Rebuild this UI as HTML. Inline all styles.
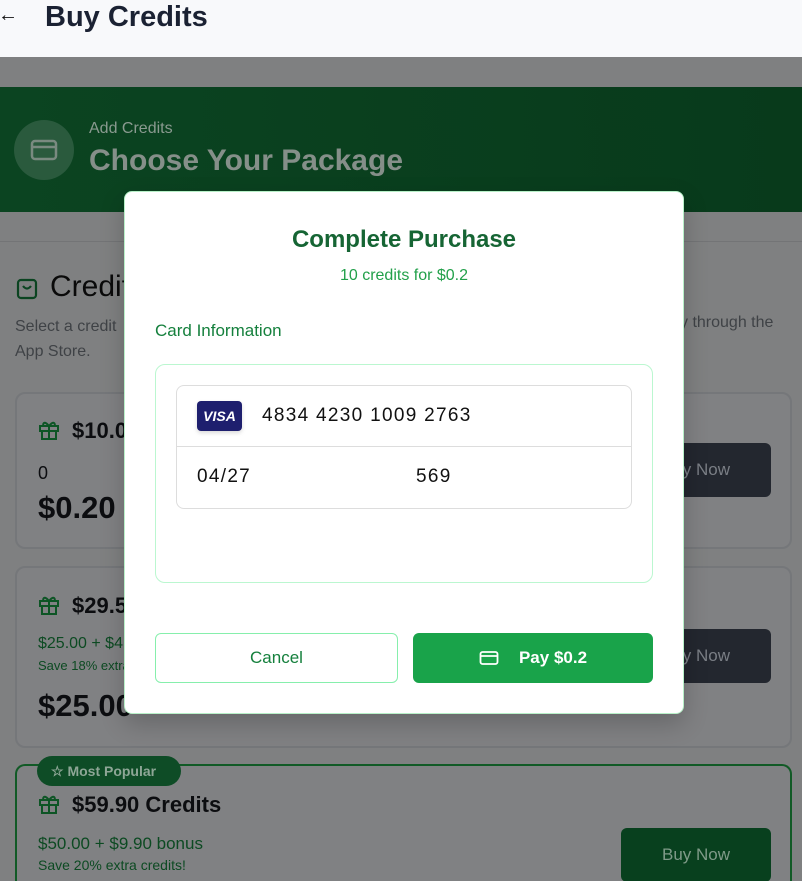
<!DOCTYPE html>
<html style="width:802px;height:881px;overflow:hidden"><head><meta charset="utf-8"><style>
*{box-sizing:border-box;margin:0;padding:0}
body{width:802px;height:881px;overflow:hidden;background:#7f8081;font-family:"Liberation Sans",sans-serif;position:relative}
.a{position:absolute}
.card{position:absolute;left:15px;width:777px;border:2px solid #75777a;border-radius:10px;background:#808183}
.bn{position:absolute;left:621px;width:150px;height:54px;border-radius:6px;background:#23272f;color:#7a7e85;font-size:17px;display:flex;align-items:center;justify-content:center}
.gift{position:absolute;left:38px}
</style></head><body>
<div class="a" style="left:0;top:0;width:802px;height:57px;background:#f8f9fb"></div>
<div class="a" style="left:-2px;top:4px;font-size:20px;color:#111">←</div>
<div class="a" style="left:45px;top:-1px;font-size:29px;font-weight:bold;color:#1b2233;line-height:36px">Buy Credits</div>
<div class="a" style="left:0;top:87px;width:802px;height:125px;background:linear-gradient(90deg,#0b4421,#083a1b)"></div>
<div class="a" style="left:14px;top:120px;width:60px;height:60px;border-radius:50%;background:#2a5a3d"></div>
<svg class="a" style="left:30px;top:138px" width="28" height="24" viewBox="0 0 28 24"><rect x="2" y="3" width="24" height="18" rx="3" fill="none" stroke="#7a8a80" stroke-width="2.5"/><line x1="2" y1="9" x2="26" y2="9" stroke="#7a8a80" stroke-width="2.5"/></svg>
<div class="a" style="left:89px;top:120px;font-size:16px;color:#8a9a90">Add Credits</div>
<div class="a" style="left:89px;top:144px;font-size:30px;font-weight:bold;color:#858f89">Choose Your Package</div>
<div class="a" style="left:0;top:241px;width:802px;height:1px;background:#737476"></div>
<svg class="a" style="left:16px;top:276px" width="22" height="24" viewBox="0 0 22 24"><rect x="2" y="4" width="18" height="18" rx="3" fill="none" stroke="#0b4421" stroke-width="2.2"/><path d="M7 10q4 5 8 0" fill="none" stroke="#0b4421" stroke-width="2.2"/></svg>
<div class="a" style="left:50px;top:270px;font-size:30px;color:#0a0a0a">Credits</div>
<div class="a" style="left:15px;top:314px;font-size:16px;color:#3f4246;line-height:25px">Select a credit<br>App Store.</div>
<div class="a" style="left:680px;top:314px;font-size:16px;color:#3f4246">y through the</div>
<div class="card" style="top:392px;height:157px"></div>
<div class="card" style="top:566px;height:182px"></div>
<div class="card" style="top:764px;height:117px;border-bottom:none;border-radius:10px 10px 0 0;border-color:#115a26"></div>
<svg class="gift" style="top:419px" width="22" height="22" viewBox="0 0 22 22"><g fill="none" stroke="#0d5525" stroke-width="2"><rect x="2" y="7" width="18" height="5"/><rect x="4" y="12" width="14" height="8"/><line x1="11" y1="7" x2="11" y2="20"/><path d="M11 7q-5-6-6-1M11 7q5-6 6-1"/></g></svg>
<svg class="gift" style="top:594px" width="22" height="22" viewBox="0 0 22 22"><g fill="none" stroke="#0d5525" stroke-width="2"><rect x="2" y="7" width="18" height="5"/><rect x="4" y="12" width="14" height="8"/><line x1="11" y1="7" x2="11" y2="20"/><path d="M11 7q-5-6-6-1M11 7q5-6 6-1"/></g></svg>
<svg class="gift" style="top:793px" width="22" height="22" viewBox="0 0 22 22"><g fill="none" stroke="#0d5525" stroke-width="2"><rect x="2" y="7" width="18" height="5"/><rect x="4" y="12" width="14" height="8"/><line x1="11" y1="7" x2="11" y2="20"/><path d="M11 7q-5-6-6-1M11 7q5-6 6-1"/></g></svg>
<div class="a" style="left:72px;top:418px;font-size:22px;font-weight:bold;color:#0c0d10">$10.00</div>
<div class="a" style="left:38px;top:463px;font-size:18px;color:#0c0d10">0</div>
<div class="a" style="left:38px;top:490px;font-size:31px;font-weight:bold;color:#0c0d10">$0.20</div>
<div class="a" style="left:72px;top:593px;font-size:22px;font-weight:bold;color:#0c0d10">$29.50</div>
<div class="a" style="left:38px;top:635px;font-size:16px;color:#0c4a22">$25.00 + $4</div>
<div class="a" style="left:38px;top:658px;font-size:13px;color:#0c4a22">Save 18% extra</div>
<div class="a" style="left:38px;top:688px;font-size:31px;font-weight:bold;color:#0c0d10">$25.00</div>
<div class="a" style="left:37px;top:756px;width:144px;height:30px;border-radius:15px;background:#0e4c26;color:#8ea696;font-size:14px;font-weight:bold;display:flex;align-items:center;padding-left:14px">☆ Most Popular</div>
<div class="a" style="left:72px;top:792px;font-size:22px;font-weight:bold;color:#0c0d10">$59.90 Credits</div>
<div class="a" style="left:38px;top:834px;font-size:17px;color:#0c4a22">$50.00 + $9.90 bonus</div>
<div class="a" style="left:38px;top:857px;font-size:14px;color:#0c4a22">Save 20% extra credits!</div>
<div class="bn" style="top:443px">Buy Now</div>
<div class="bn" style="top:629px">Buy Now</div>
<div class="bn" style="top:828px;background:#08401e;color:#7f9a88">Buy Now</div>

<div class="a" style="left:124px;top:191px;width:560px;height:523px;background:#fff;border:1px solid #b8f0c8;border-radius:8px;box-shadow:0 10px 25px rgba(0,0,0,.2)"></div>
<div class="a" style="left:124px;top:226px;width:560px;text-align:center;font-size:24px;font-weight:bold;color:#166534">Complete Purchase</div>
<div class="a" style="left:124px;top:267px;width:560px;text-align:center;font-size:16px;color:#22a04a">10 credits for $0.2</div>
<div class="a" style="left:155px;top:321px;font-size:17px;color:#15803d">Card Information</div>
<div class="a" style="left:155px;top:364px;width:498px;height:219px;border:1px solid #bbf7d0;border-radius:10px"></div>
<div class="a" style="left:176px;top:385px;width:456px;height:124px;border:1px solid #ddd;border-radius:8px"></div>
<div class="a" style="left:177px;top:446px;width:454px;height:1px;background:#ddd"></div>
<div class="a" style="left:197px;top:401px;width:45px;height:30px;border-radius:4px;background:#1e1f6e;color:#fff;font-size:14px;font-weight:bold;font-style:italic;display:flex;align-items:center;justify-content:center;box-shadow:0 2px 4px rgba(0,0,0,.15)">VISA</div>
<div class="a" style="left:262px;top:405px;font-size:19px;color:#111;letter-spacing:1.3px">4834 4230 1009 2763</div>
<div class="a" style="left:197px;top:466px;font-size:19px;color:#111;letter-spacing:1.3px">04/27</div>
<div class="a" style="left:416px;top:466px;font-size:19px;color:#111;letter-spacing:1.3px">569</div>
<div class="a" style="left:155px;top:633px;width:243px;height:50px;border:1px solid #86efac;border-radius:6px;display:flex;align-items:center;justify-content:center;color:#15803d;font-size:17px">Cancel</div>
<div class="a" style="left:413px;top:633px;width:240px;height:50px;background:#19a34a;border-radius:6px;display:flex;align-items:center;justify-content:center;color:#fff;font-size:17px;font-weight:bold"><svg width="20" height="16" viewBox="0 0 20 16" style="margin-right:20px"><rect x="1.5" y="2" width="17" height="12" rx="2" fill="none" stroke="#fff" stroke-width="1.8"/><line x1="1.5" y1="6" x2="18.5" y2="6" stroke="#fff" stroke-width="1.8"/></svg>Pay $0.2</div>
</body></html>
